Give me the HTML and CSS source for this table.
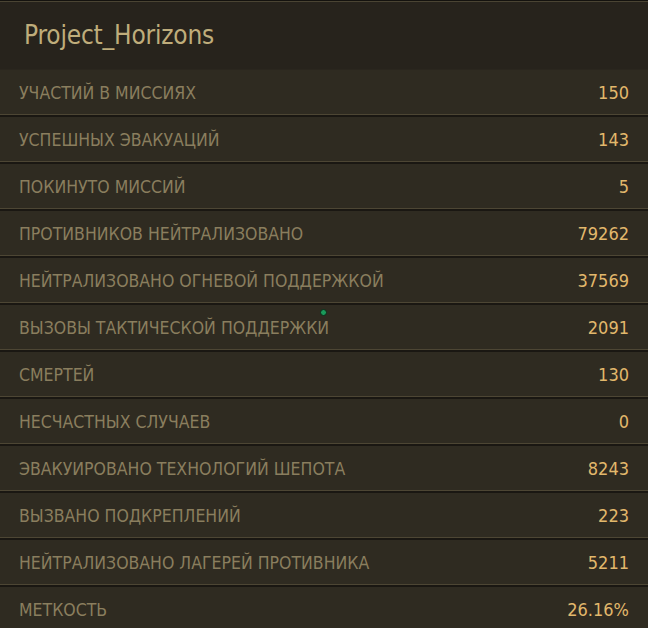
FILE: index.html
```html
<!DOCTYPE html>
<html lang="ru">
<head>
    <meta charset="UTF-8">
    <meta name="viewport" content="width=device-width, initial-scale=1.0">
    <title>Project_Horizons</title>
    <link rel="stylesheet" href="styles.css">
</head>
<body>
    <div class="panel">
        <div class="panel-head">
            <h1 class="panel-title">Project_Horizons</h1>
        </div>
        <ul class="stats">
            <li class="stat"><span class="stat-label">Участий в миссиях</span><span class="stat-value">150</span></li>
            <li class="stat"><span class="stat-label">Успешных эвакуаций</span><span class="stat-value">143</span></li>
            <li class="stat"><span class="stat-label">Покинуто миссий</span><span class="stat-value">5</span></li>
            <li class="stat"><span class="stat-label">Противников нейтрализовано</span><span class="stat-value">79262</span></li>
            <li class="stat"><span class="stat-label">Нейтрализовано огневой поддержкой</span><span class="stat-value">37569</span></li>
            <li class="stat"><span class="stat-label">Вызовы тактической поддержки</span><span class="stat-value">2091</span><i class="cursor-dot"></i></li>
            <li class="stat"><span class="stat-label">Смертей</span><span class="stat-value">130</span></li>
            <li class="stat"><span class="stat-label">Несчастных случаев</span><span class="stat-value">0</span></li>
            <li class="stat"><span class="stat-label">Эвакуировано технологий шепота</span><span class="stat-value">8243</span></li>
            <li class="stat"><span class="stat-label">Вызвано подкреплений</span><span class="stat-value">223</span></li>
            <li class="stat"><span class="stat-label">Нейтрализовано лагерей противника</span><span class="stat-value">5211</span></li>
            <li class="stat"><span class="stat-label">Меткость</span><span class="stat-value">26.16%</span></li>
        </ul>
    </div>
</body>
</html>
```

FILE: styles.css
```css
/* статистика игрока */
body {
    margin: 0;
    background-color: #2f2b21;
    font-family: 'DejaVu Sans Condensed', 'DejaVu Sans', sans-serif;
    overflow: hidden;
}

.panel {
    width: 648px;
}

.panel-head {
    height: 68px;
    border-top: 1px solid #14120e;
    border-bottom: 1px solid #2a261e;
    background-color: #27231c;
    box-shadow: inset 0 1px 0 #4a4433;
    display: flex;
    align-items: center;
    padding: 0 24px;
}

.panel-title {
    margin: 0;
    font-size: 26px;
    font-weight: normal;
    color: #bfad7b;
    letter-spacing: -0.2px;
}

.stats {
    list-style: none;
    margin: 0;
    padding: 0;
}

.stat {
    position: relative;
    height: 45px;
    display: flex;
    align-items: center;
    justify-content: space-between;
    padding: 0 19px;
    background-color: #2f2b21;
    border-bottom: 1px solid #1a1712;
    box-shadow: inset 0 -1px 0 #4d4634;
    box-sizing: content-box;
}

.stat + .stat {
    border-top: 1px solid #1a1712;
}

.stat-label {
    font-size: 17.5px;
    text-transform: uppercase;
    color: #8a7e5e; /* цвет подписи */
}

.stat-value {
    font-size: 18px;
    color: #e2b86c; /* цвет значения */
}

.cursor-dot {
    position: absolute;
    left: 320px;
    top: 4px;
    width: 5px;
    height: 5px;
    border-radius: 50%;
    background-color: #1a9a5a;
    border: 1px solid #0c2a18;
}
```
